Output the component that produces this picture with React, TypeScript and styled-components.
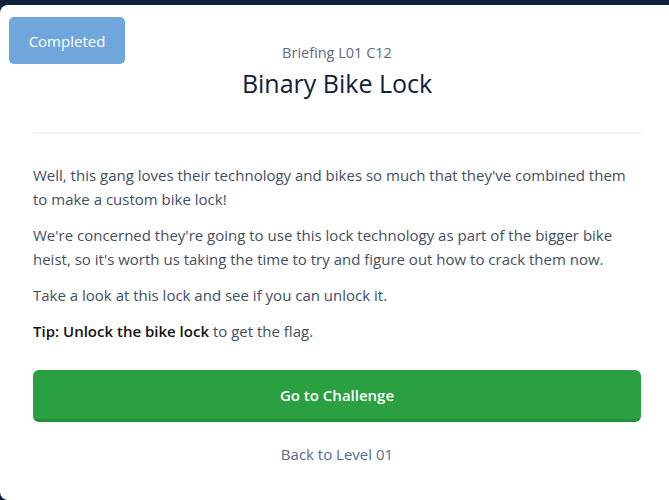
import styled, { createGlobalStyle } from "styled-components";

const GlobalStyle = createGlobalStyle`
  html, body {
    margin: 0;
    padding: 0;
    background: #0f2139;
    font-family: "Open Sans", Lato, sans-serif;
  }
`;

const Page = styled.div`
  padding-top: 5px;
  height: 500px;
  box-sizing: border-box;
  overflow: hidden;
`;

const Card = styled.div`
  position: relative;
  background: #ffffff;
  border-radius: 8px;
  width: 676px;
  height: 495px;
  box-sizing: border-box;
  padding: 38px 0 0 33px;
`;

const Badge = styled.div`
  position: absolute;
  top: 12px;
  left: 9px;
  width: 116px;
  height: 47px;
  border-radius: 5px;
  background: #6fa7dd;
  color: #ffffff;
  font-size: 15px;
  display: flex;
  align-items: center;
  justify-content: center;
`;

const Content = styled.div`
  width: 608px;
  display: flex;
  flex-direction: column;
`;

const Header = styled.header`
  display: flex;
  flex-direction: column;
  align-items: center;
  padding-bottom: 30px;
  border-bottom: 2px solid #eef1f5;
`;

const Sub = styled.div`
  color: #5b6b7f;
  font-size: 14.5px;
  line-height: 20px;
`;

const Title = styled.h1`
  margin: 5px 0 4px;
  color: #0f2139;
  font-size: 25px;
  font-weight: 400;
  line-height: 30px;
`;

const Body = styled.div`
  padding-top: 29px;
`;

const Para = styled.p`
  margin: 0 0 12px;
  color: #434f5e;
  font-size: 15px;
  line-height: 24px;

  strong {
    color: #111111;
    font-weight: 600;
  }
`;

const GoButton = styled.button`
  margin-top: 15px;
  height: 52px;
  border: none;
  border-bottom: 3px solid #23913a;
  border-radius: 6px;
  background: #2aa040;
  color: #ffffff;
  font-family: inherit;
  font-size: 15px;
  font-weight: 600;
  cursor: pointer;
`;

const BackLink = styled.a`
  margin-top: 20px;
  align-self: center;
  color: #5b6b7f;
  font-size: 15px;
  line-height: 24px;
  text-decoration: none;
`;

export default function App() {
  return (
    <Page>
      <GlobalStyle />
      <Card>
        <Badge>Completed</Badge>
        <Content>
          <Header>
            <Sub>Briefing L01 C12</Sub>
            <Title>Binary Bike Lock</Title>
          </Header>
          <Body>
            <Para>
              Well, this gang loves their technology and bikes so much that
              they've combined them to make a custom bike lock!
            </Para>
            <Para>
              We're concerned they're going to use this lock technology as part
              of the bigger bike heist, so it's worth us taking the time to try
              and figure out how to crack them now.
            </Para>
            <Para>Take a look at this lock and see if you can unlock it.</Para>
            <Para>
              <strong>Tip: Unlock the bike lock</strong> to get the flag.
            </Para>
          </Body>
          <GoButton>Go to Challenge</GoButton>
          <BackLink href="#">Back to Level 01</BackLink>
        </Content>
      </Card>
    </Page>
  );
}
